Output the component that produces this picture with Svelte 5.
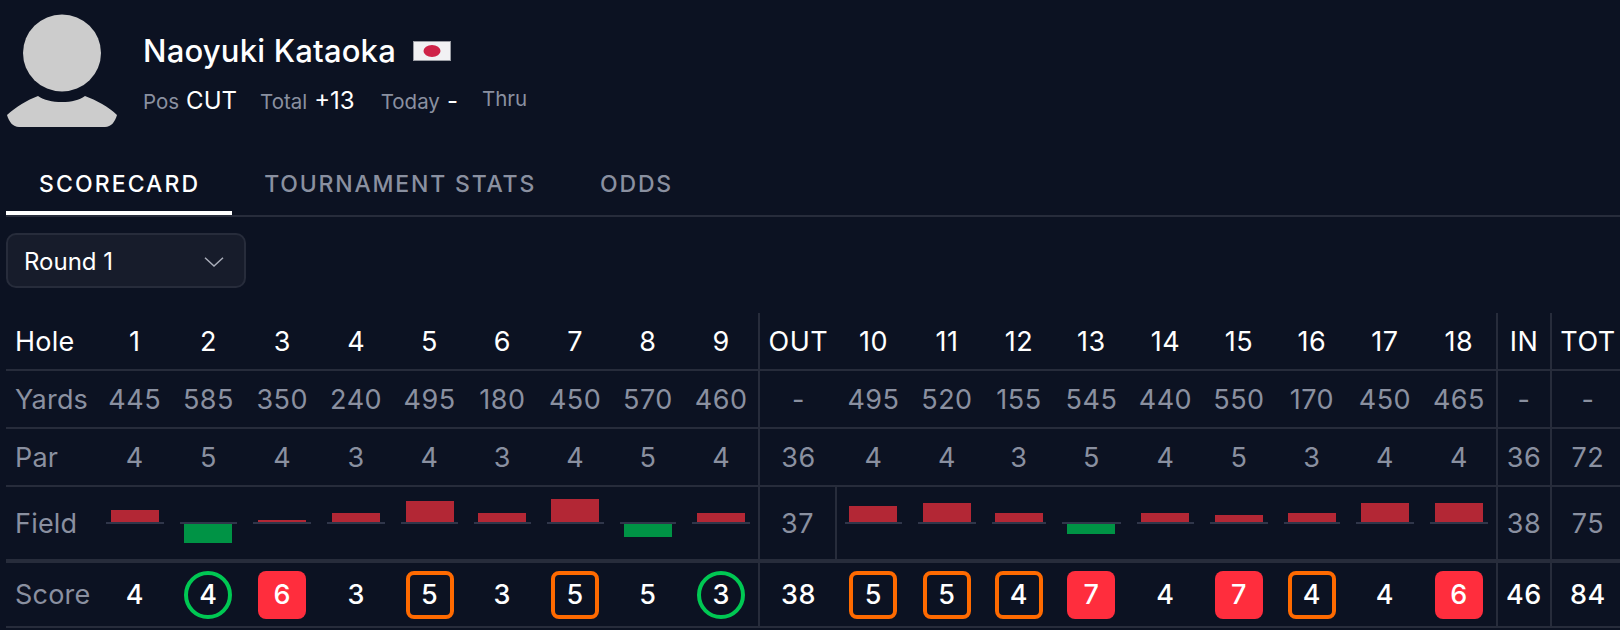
<script>
  const holes = ['1','2','3','4','5','6','7','8','9','OUT','10','11','12','13','14','15','16','17','18','IN','TOT'];
  const widths = [73.5,73.8,73.9,73.9,72.9,72.7,72.9,72.8,73.6,79,73,74,70,75,73,74,72,74,74,54,70];
  const yards = ['445','585','350','240','495','180','450','570','460','-','495','520','155','545','440','550','170','450','465','-','-'];
  const par = [4,5,4,3,4,3,4,5,4,36,4,4,3,5,4,5,3,4,4,36,72];
  // field average bars, positive = over par (px), totals are strings
  const field = [12,-19,2.5,9,21,9.5,23,-12.5,9.5,'37',16,19,9.5,-9.5,9,7,9,19,19,'38','75'];
  const score = [
    [4,''],[4,'birdie'],[6,'double'],[3,''],[5,'bogey'],[3,''],[5,'bogey'],[5,''],[3,'birdie'],[38,''],
    [5,'bogey'],[5,'bogey'],[4,'bogey'],[7,'double'],[4,''],[7,'double'],[4,'bogey'],[4,''],[6,'double'],[46,''],[84,'']
  ];
  const sep = (i) => (i === 9 ? 'out' : i === 19 ? 'sep' : i === 20 ? 'sep last' : '');
</script>

<div class="page">
  <header class="player">
    <svg class="avatar" viewBox="0 0 112 113" aria-hidden="true">
      <ellipse cx="56" cy="39" rx="39" ry="38.5" fill="#cccccc" />
      <path d="M1 101 C10 93 21 86 32 82 C38 86 46 88 56 88 C66 88 73 86 79 82 C90 86 103 93 111 101 C109 108 105 113 99 113 L13 113 C7 113 3 108 1 101 Z" fill="#cccccc" />
    </svg>
    <div class="info">
      <div class="name">
        <span>Naoyuki Kataoka</span>
        <svg class="flag" viewBox="0 0 38 20" aria-hidden="true">
          <rect x="0.5" y="0.5" width="37" height="19" fill="#f1f1f3" stroke="#9a9ca3" />
          <ellipse cx="19" cy="10" rx="8.5" ry="6" fill="#cf2348" />
        </svg>
      </div>
      <div class="stats">
        <div class="stat"><span class="lbl">Pos</span><span class="val">CUT</span></div>
        <div class="stat"><span class="lbl">Total</span><span class="val">+13</span></div>
        <div class="stat today"><span class="lbl">Today</span><span class="val">-</span></div>
        <div class="stat thru"><span class="lbl">Thru</span></div>
      </div>
    </div>
  </header>

  <nav class="tabs">
    <button class="tab active">SCORECARD</button>
    <button class="tab">TOURNAMENT STATS</button>
    <button class="tab">ODDS</button>
  </nav>

  <div class="select">
    <span>Round 1</span>
    <svg width="20" height="10" viewBox="0 0 20 10" fill="none" stroke="#a9adb9" stroke-width="1.5" aria-hidden="true">
      <path d="M1 0.8 L10 9 L19 0.8" />
    </svg>
  </div>

  <table>
    <colgroup>
      <col style="width: 92px" />
      {#each widths as w}<col style="width: {w}px" />{/each}
    </colgroup>
    <tbody>
      <tr class="r-head">
        <th>Hole</th>
        {#each holes as h, i}<td class={sep(i)}>{h}</td>{/each}
      </tr>
      <tr class="r-muted">
        <th>Yards</th>
        {#each yards as y, i}<td class={sep(i)}>{y}</td>{/each}
      </tr>
      <tr class="r-muted">
        <th>Par</th>
        {#each par as p, i}<td class={sep(i)}>{p}</td>{/each}
      </tr>
      <tr class="r-muted r-field">
        <th>Field</th>
        {#each field as f, i}
          <td class="{sep(i)} {i === 9 ? 'out-end' : ''}">
            {#if typeof f === 'string'}
              {f}
            {:else}
              <div class="chart">
                <div class="half up">
                  {#if f > 0}<div class="bar over" style="height: {f}px"></div>{/if}
                </div>
                <div class="half down">
                  {#if f < 0}<div class="bar under" style="height: {-f}px"></div>{/if}
                </div>
              </div>
            {/if}
          </td>
        {/each}
      </tr>
      <tr class="r-score">
        <th>Score</th>
        {#each score as [s, kind], i}
          <td class={sep(i)}><span class="mark {kind}">{s}</span></td>
        {/each}
      </tr>
    </tbody>
  </table>
</div>

<style>
  :global(body) {
    margin: 0;
    background: #0c1222;
  }
  .page {
    width: 1620px;
    height: 630px;
    box-sizing: border-box;
    padding: 14px 0 0 6px;
    overflow: hidden;
    background: #0c1222;
    color: #fff;
    font-family: Inter, 'Liberation Sans', sans-serif;
  }
  .player {
    display: flex;
    gap: 25px;
  }
  .avatar {
    width: 112px;
    height: 113px;
    flex: none;
  }
  .info {
    padding-top: 20px;
  }
  .name {
    display: flex;
    align-items: center;
    gap: 17px;
    height: 34px;
    font-size: 31px;
    font-weight: 500;
    letter-spacing: 0.2px;
    line-height: 34px;
  }
  .flag {
    width: 38px;
    height: 20px;
    filter: blur(0.3px);
  }
  .stats {
    display: flex;
    align-items: center;
    gap: 23px;
    height: 32px;
    margin-top: 16px;
  }
  .stat {
    display: flex;
    align-items: baseline;
    gap: 7px;
  }
  .lbl {
    font-size: 20.5px;
    color: #8a90a0;
  }
  .val {
    font-size: 24px;
  }
  .today {
    margin-left: 3px;
  }
  .thru {
    margin-left: 1px;
    margin-top: -4px;
  }
  .tabs {
    display: flex;
    margin-top: 24px;
    border-bottom: 2px solid #272c3b;
  }
  .tab {
    position: relative;
    height: 64px;
    padding: 2px 32px 0;
    border: 0;
    background: none;
    color: #8a90a0;
    font: 500 23px Inter, 'Liberation Sans', sans-serif;
    letter-spacing: 1.8px;
  }
  .tab.active {
    padding-left: 33px;
    color: #fff;
    letter-spacing: 2.1px;
  }
  .tab.active::after {
    content: '';
    position: absolute;
    left: 0;
    right: 0;
    bottom: 0;
    height: 4px;
    background: #fff;
  }
  .select {
    display: flex;
    align-items: center;
    justify-content: space-between;
    box-sizing: border-box;
    width: 240px;
    height: 55px;
    margin-top: 16px;
    padding: 2px 20px 0 16px;
    border: 2px solid #272c3b;
    border-radius: 10px;
    background: #171c2b;
    font-size: 24px;
  }
  table {
    table-layout: fixed;
    width: 1614px;
    margin-top: 25px;
    border-collapse: separate;
    border-spacing: 0;
    font-size: 27px;
    letter-spacing: 0.5px;
  }
  th {
    padding: 0 0 0 9px;
    font-weight: 400;
    letter-spacing: 0.2px;
    text-align: left;
  }
  th,
  td {
    box-sizing: border-box;
    border-bottom: 2px solid #272c3b;
  }
  td {
    padding: 0;
    text-align: center;
  }
  td.last {
    padding-left: 4px;
  }
  .r-head th,
  .r-head td {
    height: 58px;
  }
  .r-muted th,
  .r-muted td {
    height: 58px;
    color: #8a90a0;
  }
  .r-field th,
  .r-field td {
    height: 76px;
    border-bottom-width: 4px;
  }
  .r-score th,
  .r-score td {
    height: 65px;
  }
  .r-score th {
    color: #8a90a0;
  }
  .r-score td {
    font-weight: 450;
  }
  .out,
  .sep {
    border-left: 2px solid #272c3b;
  }
  .out-end {
    border-right: 2px solid #272c3b;
  }
  .chart {
    display: flex;
    flex-direction: column;
    height: 72px;
    padding: 0 8px;
  }
  .half {
    display: flex;
    justify-content: center;
  }
  .up {
    align-items: flex-end;
    height: 35px;
    border-bottom: 2px solid #30364a;
  }
  .down {
    align-items: flex-start;
  }
  .bar {
    width: 48px;
  }
  .over {
    background: #b32735;
  }
  .under {
    background: #009345;
  }
  .mark {
    display: inline-flex;
    align-items: center;
    justify-content: center;
    box-sizing: border-box;
    width: 48px;
    height: 48px;
    vertical-align: middle;
  }
  .birdie {
    border: 4px solid #00c853;
    border-radius: 50%;
  }
  .bogey {
    border: 4px solid #ff6a00;
    border-radius: 8px;
  }
  .double {
    border-radius: 8px;
    background: #ff2d3d;
    font-weight: 500;
  }
</style>
